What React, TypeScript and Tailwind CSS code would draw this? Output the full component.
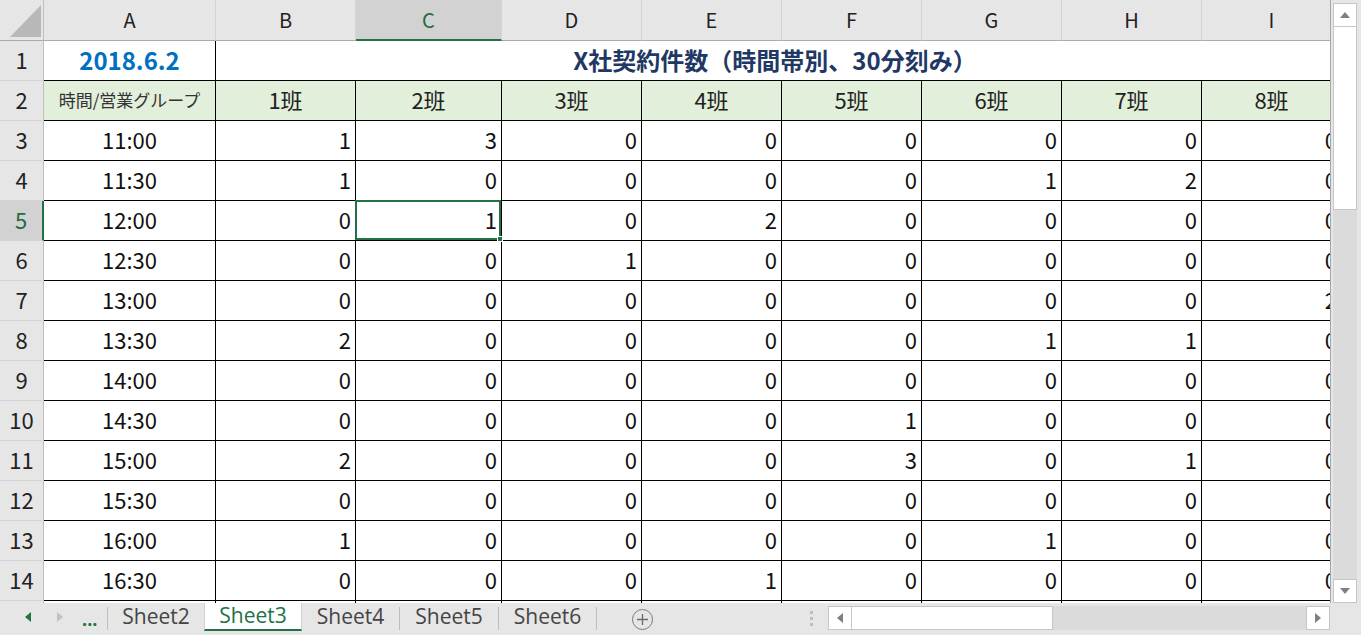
import React from 'react';

const COLS = ['A', 'B', 'C', 'D', 'E', 'F', 'G', 'H', 'I'];

const DATA: [string, number[]][] = [
  ['11:00', [1, 3, 0, 0, 0, 0, 0, 0]],
  ['11:30', [1, 0, 0, 0, 0, 1, 2, 0]],
  ['12:00', [0, 1, 0, 2, 0, 0, 0, 0]],
  ['12:30', [0, 0, 1, 0, 0, 0, 0, 0]],
  ['13:00', [0, 0, 0, 0, 0, 0, 0, 2]],
  ['13:30', [2, 0, 0, 0, 0, 1, 1, 0]],
  ['14:00', [0, 0, 0, 0, 0, 0, 0, 0]],
  ['14:30', [0, 0, 0, 0, 1, 0, 0, 0]],
  ['15:00', [2, 0, 0, 0, 3, 0, 1, 0]],
  ['15:30', [0, 0, 0, 0, 0, 0, 0, 0]],
  ['16:00', [1, 0, 0, 0, 0, 1, 0, 0]],
  ['16:30', [0, 0, 0, 1, 0, 0, 0, 0]],
];

const cell = 'h-[40px] border-r border-b border-black flex items-center pb-[2px]';

function RowHead({ n, active }: { n: number | string; active?: boolean }) {
  return (
    <div
      className={
        'h-[40px] flex items-center justify-center text-[22px] pb-[2px] border-b border-b-[#d4d4d4] ' +
        (active
          ? 'bg-[#d2d2d2] text-[#1e6b40] border-r-2 border-r-[#217346]'
          : 'bg-[#e6e6e6] text-[#222] border-r border-r-[#bfbfbf]')
      }
    >
      {n}
    </div>
  );
}

function Arrow({ dir, color }: { dir: 'up' | 'down' | 'left' | 'right'; color: string }) {
  const pts = {
    up: '0,6 5,0 10,6',
    down: '0,0 10,0 5,6',
    left: '6,0 6,10 0,5',
    right: '0,0 0,10 6,5',
  }[dir];
  const vert = dir === 'up' || dir === 'down';
  return (
    <svg width={vert ? 10 : 6} height={vert ? 6 : 10} viewBox={vert ? '0 0 10 6' : '0 0 6 10'}>
      <polygon points={pts} fill={color} />
    </svg>
  );
}

function Sheet() {
  return (
    <div className="grid w-[1341px] grid-cols-[44px_172px_140px_146px_140px_140px_140px_140px_140px_140px]">
      {/* column headers */}
      <div className="h-[41px] bg-[#e6e6e6] border-r border-r-[#bfbfbf] border-b border-b-[#ababab] relative">
        <svg className="absolute left-[10px] top-[5px]" width="31" height="32" viewBox="0 0 31 32">
          <polygon points="0,32 31,32 31,0" fill="#b8b8b8" />
        </svg>
      </div>
      {COLS.map((c) => (
        <div
          key={c}
          className={
            'h-[41px] flex items-center justify-center text-[20px] border-r border-r-[#d4d4d4] ' +
            (c === 'C'
              ? 'bg-[#d2d2d2] text-[#1e6b40] border-b-2 border-b-[#217346]'
              : 'bg-[#e6e6e6] text-[#222] border-b border-b-[#ababab]')
          }
        >
          {c}
        </div>
      ))}

      {/* row 1 */}
      <RowHead n={1} />
      <div className={cell + ' justify-center bg-white'}>
        <span className="text-[24px] font-bold text-[#0070c0]">2018.6.2</span>
      </div>
      <div className="col-span-8 h-[40px] border-b border-black flex items-center justify-center bg-white pr-[8px] pb-[2px]">
        <span className="text-[24px] font-bold text-[#1f3864]">X社契約件数（時間帯別、30分刻み）</span>
      </div>

      {/* row 2 */}
      <RowHead n={2} />
      <div className={cell + ' justify-center bg-[#e2efda] text-[17px] text-[#333]'}>時間/営業グループ</div>
      {[1, 2, 3, 4, 5, 6, 7, 8].map((n) => (
        <div key={n} className={cell + ' justify-center bg-[#e2efda] text-[22px] text-[#222]'}>
          {n}班
        </div>
      ))}

      {/* data rows */}
      {DATA.map(([time, vals], r) => (
        <React.Fragment key={time}>
          <RowHead n={r + 3} active={r === 2} />
          <div className={cell + ' justify-center bg-white text-[22px] text-[#111]'}>{time}</div>
          {vals.map((v, i) => (
            <div key={i} className={cell + ' justify-end pr-[4px] bg-white text-[22px] text-[#111] relative'}>
              {v}
              {r === 2 && i === 1 && (
                <div className="absolute -left-px -top-px right-0 bottom-0 border-2 border-[#217346] z-10">
                  <div className="absolute -right-[4px] -bottom-[4px] w-[6px] h-[6px] bg-[#217346] border border-white" />
                </div>
              )}
            </div>
          ))}
        </React.Fragment>
      ))}

      {/* row 15 (partially visible) */}
      <RowHead n={15} />
      {COLS.map((c) => (
        <div key={c} className={cell + ' bg-white'} />
      ))}
    </div>
  );
}

export default function App() {
  return (
    <div className="w-[1361px] h-[635px] flex flex-col bg-[#e6e6e6] overflow-hidden font-['Noto_Sans_CJK_JP','Noto_Sans',sans-serif]">
      <div className="flex h-[603px]">
        <div className="w-[1331px] h-full overflow-hidden border-r border-[#a6a6a6] bg-white">
          <Sheet />
        </div>
        {/* vertical scrollbar */}
        <div className="w-[30px] h-full pl-[2px] pt-[3px] flex flex-col">
          <div className="w-[24px] h-[24px] bg-white border border-[#c6c6c6] flex items-center justify-center">
            <Arrow dir="up" color="#7f7f7f" />
          </div>
          <div className="w-[24px] h-[183px] bg-white border border-[#c6c6c6] border-t-0" />
          <div className="w-[24px] flex-1 bg-[#dbdbdb]" />
          <div className="w-[24px] h-[24px] bg-white border border-[#c6c6c6] flex items-center justify-center">
            <Arrow dir="down" color="#7f7f7f" />
          </div>
        </div>
      </div>

      {/* sheet tabs bar */}
      <div className="h-[32px] flex items-start text-[21px] font-['Open_Sans','Noto_Sans',sans-serif] text-[#444]">
        <div className="w-[107px] h-[28px] flex items-center">
          <div className="ml-[25px] flex">
            <Arrow dir="left" color="#217346" />
          </div>
          <div className="ml-[26px] flex">
            <Arrow dir="right" color="#c2c2c2" />
          </div>
          <span className="ml-[19px] text-[18px] font-bold text-[#217346] leading-none pt-[4px]">...</span>
        </div>
        <div className="w-px h-[23px] mt-[4px] bg-[#bdbdbd]" />
        <div className="w-[96px] h-[28px] flex items-center justify-center">Sheet2</div>
        <div className="w-[98px] h-[28px] flex items-center justify-center bg-white text-[#217346] border-b-2 border-[#217346] border-x border-x-[#d0d0d0]">
          Sheet3
        </div>
        <div className="w-[97px] h-[28px] flex items-center justify-center">Sheet4</div>
        <div className="w-px h-[23px] mt-[4px] bg-[#bdbdbd]" />
        <div className="w-[98px] h-[28px] flex items-center justify-center">Sheet5</div>
        <div className="w-px h-[23px] mt-[4px] bg-[#bdbdbd]" />
        <div className="w-[97px] h-[28px] flex items-center justify-center">Sheet6</div>
        <div className="w-px h-[23px] mt-[4px] bg-[#bdbdbd]" />
        <div className="ml-[35px] mt-[6px] w-[21px] h-[21px] rounded-full border border-[#7a7a7a] flex items-center justify-center">
          <svg width="11" height="11" viewBox="0 0 11 11">
            <path d="M5.5 0V11M0 5.5H11" stroke="#6a6a6a" strokeWidth="1.3" />
          </svg>
        </div>
        <div className="ml-[157px] mt-[8px] flex flex-col gap-[3px]">
          <div className="w-[3px] h-[3px] bg-[#bdbdbd]" />
          <div className="w-[3px] h-[3px] bg-[#bdbdbd]" />
          <div className="w-[3px] h-[3px] bg-[#bdbdbd]" />
        </div>
        {/* horizontal scrollbar */}
        <div className="ml-[15px] mt-[3px] flex h-[24px]">
          <div className="w-[24px] h-[24px] bg-white border border-[#c6c6c6] flex items-center justify-center">
            <Arrow dir="left" color="#7f7f7f" />
          </div>
          <div className="w-[201px] h-[24px] bg-white border border-[#c6c6c6] border-l-0" />
          <div className="w-[253px] h-[24px] bg-[#dbdbdb]" />
          <div className="w-[24px] h-[24px] bg-white border border-[#c6c6c6] flex items-center justify-center">
            <Arrow dir="right" color="#7f7f7f" />
          </div>
        </div>
      </div>
    </div>
  );
}
